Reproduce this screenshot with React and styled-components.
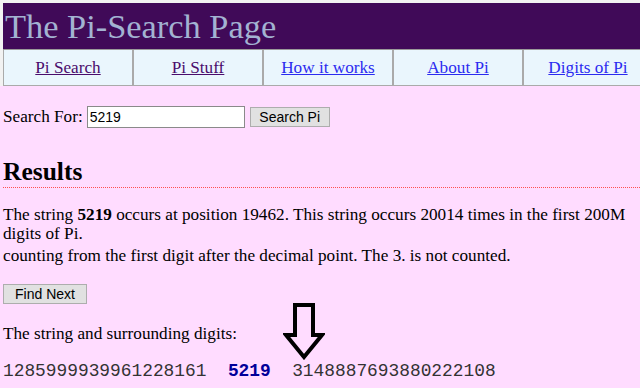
import React from "react";
import styled, { createGlobalStyle } from "styled-components";

const Global = createGlobalStyle`
  html, body { margin: 0; padding: 0; background: #ffdcff; overflow: hidden; }
  body { font-family: "Liberation Serif", "Times New Roman", serif; font-size: 17.2px; color: #000; }
`;

const Page = styled.div`
  width: 660px;
`;

const Top = styled.div`
  background: #f2f2f2;
  padding: 3px 0 0 3px;
`;

const Banner = styled.div`
  background: #400a58;
  height: 46px;
  border-bottom: 1px solid #9a9a9a;
  display: flex;
  align-items: center;
  padding-left: 2px;
`;

const Title = styled.h1`
  margin: 0;
  font-family: "Liberation Serif", serif;
  font-weight: normal;
  font-size: 34.4px;
  color: #a3b3d2;
  line-height: 1;
  padding-top: 1px;
`;

const Nav = styled.div`
  display: grid;
  grid-template-columns: repeat(5, 130px);
  background: #eaf6fd;
  border-left: 1px solid #aaaaaa;
  border-bottom: 1px solid #aaaaaa;
`;

const NavCell = styled.div`
  height: 35px;
  display: flex;
  align-items: center;
  justify-content: center;
  padding-top: 1px;
  box-sizing: border-box;
  border-right: 2px solid #aaaaaa;
`;

const NavLink = styled.a`
  color: ${(p) => (p.$visited ? "#4a0c6c" : "#2b2bf0")};
  text-decoration: underline;
  font-size: 17.2px;
`;

const Content = styled.div`
  padding: 0 0 0 3px;
  width: 637px;
`;

const SearchRow = styled.form`
  display: flex;
  align-items: center;
  margin-top: 19px;
  height: 23px;
`;

const Label = styled.span`
  margin-right: 4px;
`;

const Input = styled.input`
  width: 152px;
  height: 18px;
  border: 1px solid #8a8a8a;
  padding: 1px 2px;
  font-family: "Liberation Sans", Arial, sans-serif;
  font-size: 14px;
  background: #fff;
  margin: 0 5px 0 0;
`;

const Button = styled.button`
  background: #e1e1e1;
  border: 1px solid #adadad;
  font-family: "Liberation Sans", Arial, sans-serif;
  font-size: 14px;
  color: #000;
  height: 20px;
  padding: 0;
  margin: 0;
  width: ${(p) => p.$w}px;
`;

const Heading = styled.h2`
  margin: 30px 0 0;
  font-size: 25.5px;
  font-weight: bold;
  line-height: 28px;
  padding-bottom: 1px;
  border-bottom: 1px dotted #ff5050;
`;

const Para = styled.p`
  margin: 17px 0 0;
  line-height: 19px;
`;

const Line = styled.span`
  display: block;
  margin-top: ${(p) => p.$gap || 0}px;
`;

const FindRow = styled.div`
  margin-top: 19px;
`;

const DigitsLabelRow = styled.div`
  position: relative;
  margin-top: 20px;
  height: 20px;
`;

const Arrow = styled.svg`
  position: absolute;
  left: 280px;
  top: -22px;
`;

const Digits = styled.div`
  margin-top: 17px;
  font-family: "Liberation Mono", "Courier New", monospace;
  font-size: 17.85px;
  line-height: 20px;
  color: #333;
  white-space: pre;
`;

const Hit = styled.b`
  color: #000099;
`;

export default function App() {
  const links = [
    ["Pi Search", true],
    ["Pi Stuff", true],
    ["How it works", false],
    ["About Pi", false],
    ["Digits of Pi", false],
  ];
  return (
    <Page>
      <Global />
      <Top>
        <Banner>
          <Title>The Pi-Search Page</Title>
        </Banner>
        <Nav>
          {links.map(([t, v]) => (
            <NavCell key={t}>
              <NavLink href="#" $visited={v}>{t}</NavLink>
            </NavCell>
          ))}
        </Nav>
      </Top>
      <Content>
        <SearchRow onSubmit={(e) => e.preventDefault()}>
          <Label>Search For:</Label>
          <Input defaultValue="5219" />
          <Button type="button" $w={80}>Search Pi</Button>
        </SearchRow>
        <Heading>Results</Heading>
        <Para>
          The string <b>5219</b> occurs at position 19462. This string occurs 20014 times in the first 200M digits of Pi.
          <Line $gap={3}>counting from the first digit after the decimal point. The 3. is not counted.</Line>
        </Para>
        <FindRow>
          <Button type="button" $w={84}>Find Next</Button>
        </FindRow>
        <DigitsLabelRow>
          The string and surrounding digits:
          <Arrow width="42" height="58" viewBox="0 0 42 58">
            <path d="M12 3 H30 V33 H39 L21 55 L3 33 H12 Z" fill="none" stroke="#000" strokeWidth="4" strokeLinejoin="miter" />
          </Arrow>
        </DigitsLabelRow>
        <Digits>
          1285999939961228161  <Hit>5219</Hit>  3148887693880222108
        </Digits>
      </Content>
    </Page>
  );
}
